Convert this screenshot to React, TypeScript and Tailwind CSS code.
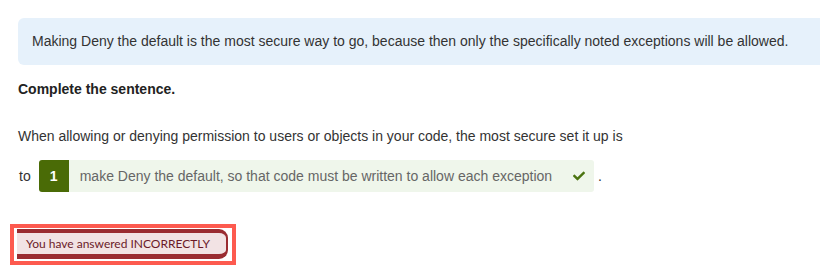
import React from "react";
import { FaCheck } from "react-icons/fa";

export default function App() {
  return (
    <div className="w-[820px] h-[273px] overflow-hidden bg-white text-[#333] font-['Liberation_Sans',Arial,sans-serif]">
      <div className="pt-[18px] pl-[18px]">
        <div className="h-[47px] flex items-center pl-[14px] bg-[#e6f1fb] rounded-l-[6px] text-[14px] text-[#333] whitespace-nowrap">
          Making Deny the default is the most secure way to go, because then only the specifically noted exceptions will be allowed.
        </div>
        <div className="mt-[14px] text-[14px] leading-[20px] font-bold text-[#222]">Complete the sentence.</div>
        <div className="mt-[27px] text-[14px] leading-[20px]">
          When allowing or denying permission to users or objects in your code, the most secure set it up is
        </div>
        <div className="mt-[14px] flex items-center h-[32px] text-[14px]">
          <span className="ml-[1px] mr-[8px]">to</span>
          <div className="flex h-[32px] items-stretch">
            <div className="w-[30px] flex items-center justify-center bg-[#4a6b06] text-white rounded-l-[3px] text-[14px] font-bold">1</div>
            <div className="flex items-center bg-[#eff6eb] rounded-r-[3px] pl-[11px] pr-[9px] text-[#666]">
              <span>make Deny the default, so that code must be written to allow each exception</span>
              <FaCheck className="ml-[21px] text-[#4b7410]" size={12} />
            </div>
          </div>
          <span className="ml-[4px]">.</span>
        </div>
        <div className="mt-[32px] -ml-[8px] inline-flex border-[4px] border-[#fd5a4f] pt-[1px] pb-[2px] pl-[3px] pr-[4px]">
          <div className="w-[211px] h-[30px] flex items-center bg-[#f2e3e4] border-t-[4px] border-b-[5px] border-r-[2px] border-[#9a2c31] rounded-r-[9px] pl-[9px] text-[12px] text-[#6b1a28] font-['Lato',sans-serif] whitespace-nowrap">
            You have answered INCORRECTLY
          </div>
        </div>
      </div>
    </div>
  );
}
